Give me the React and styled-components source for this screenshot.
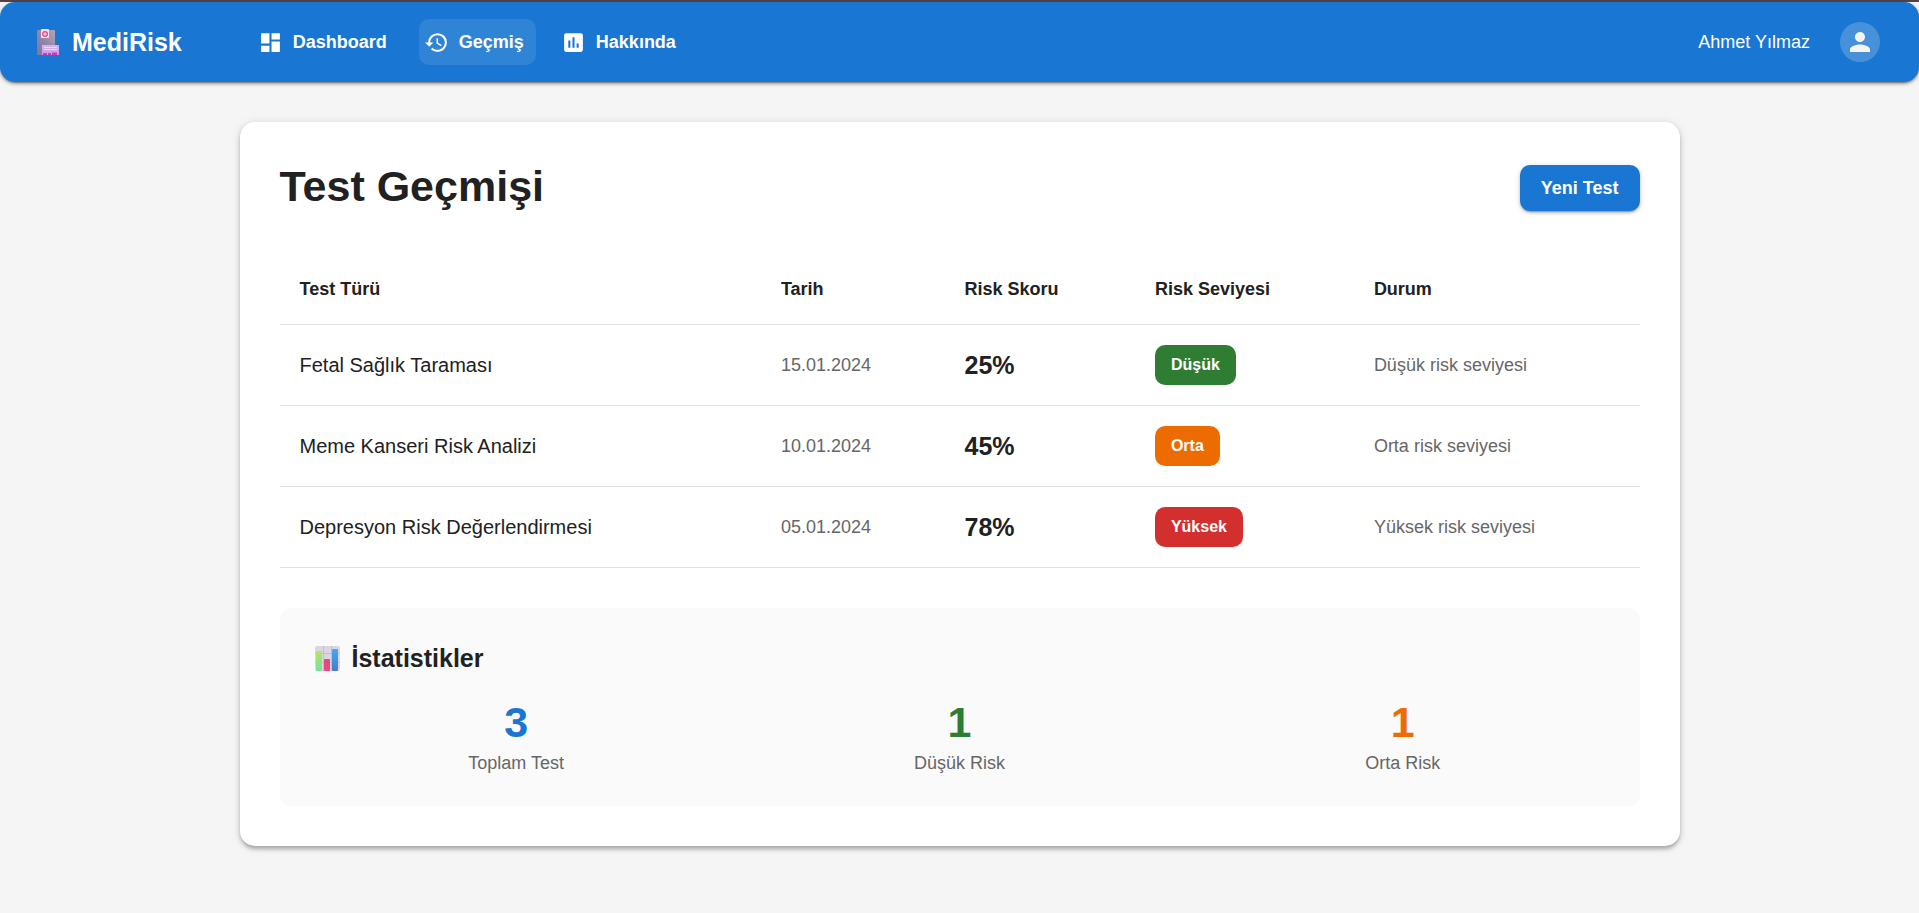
import React from "react";
import styled, { createGlobalStyle, css } from "styled-components";
import { MdAssessment, MdDashboard, MdHistory, MdPerson } from "react-icons/md";

const color = {
  primary: "#1976d2",
  low: "#2e7d32",
  medium: "#ed6c02",
  high: "#d32f2f",
  text: "#212121",
  muted: "#666666",
  line: "#e0e0e0",
};

const GlobalStyle = createGlobalStyle`
  *, *::before, *::after { box-sizing: border-box; }
  body {
    margin: 0;
    background: #f5f5f5;
    color: ${color.text};
    font-family: "Liberation Sans", Arial, sans-serif;
    font-size: 18px;
    line-height: 25px;
  }
`;

const Page = styled.div`
  border-top: 2px solid #554341;
`;

const Header = styled.header`
  display: flex;
  align-items: center;
  height: 80px;
  padding: 0 39px 0 30px;
  border-radius: 15px;
  background: ${color.primary};
  color: #fff;
  box-shadow: 0 3px 1px -2px rgba(0, 0, 0, 0.2), 0 2px 3px rgba(0, 0, 0, 0.3), 0 1px 6px rgba(0, 0, 0, 0.12);
`;

const Brand = styled.a`
  display: flex;
  align-items: center;
  gap: 8px;
  margin-right: 71px;
  color: inherit;
  font-size: 25px;
  font-weight: 700;
  line-height: 40px;
  text-decoration: none;
`;

const Nav = styled.nav`
  display: flex;
  gap: 20px;
`;

const NavLink = styled.a`
  display: flex;
  align-items: center;
  gap: 10px;
  height: 46px;
  padding: 0 12px 0 5px;
  border-radius: 10px;
  color: inherit;
  font-weight: 700;
  text-decoration: none;
  ${(p) => p.$active && css`background: rgba(255, 255, 255, 0.1);`}

  svg { width: 25px; height: 25px; }
`;

const User = styled.div`
  display: flex;
  align-items: center;
  gap: 30px;
  margin-left: auto;
`;

const Avatar = styled.button`
  display: grid;
  place-items: center;
  width: 40px;
  height: 40px;
  padding: 0;
  border: 0;
  border-radius: 50%;
  background: rgba(255, 255, 255, 0.2);
  color: #f5f5f5;

  svg { width: 30px; height: 30px; }
`;

const Card = styled.main`
  max-width: 1440px;
  margin: 40px auto;
  padding: 40px;
  border-radius: 15px;
  background: #fff;
  box-shadow: 0 4px 4px -2px rgba(0, 0, 0, 0.2), 0 3px 5px rgba(0, 0, 0, 0.14), 0 1px 10px rgba(0, 0, 0, 0.12);
`;

const CardHeader = styled.div`
  display: flex;
  align-items: center;
  justify-content: space-between;
  margin-bottom: 40px;
`;

const Title = styled.h1`
  margin: 0;
  padding-bottom: 4px;
  font-size: 43px;
  font-weight: 700;
  line-height: 48px;
`;

const PrimaryButton = styled.button`
  height: 46px;
  padding: 0 21px;
  border: 0;
  border-radius: 10px;
  background: ${color.primary};
  color: #fff;
  font: inherit;
  font-weight: 700;
  box-shadow: 0 3px 1px -2px rgba(0, 0, 0, 0.2), 0 2px 3px rgba(0, 0, 0, 0.2), 0 1px 6px rgba(0, 0, 0, 0.12);
`;

const Table = styled.table`
  width: 100%;
  table-layout: fixed;
  border-collapse: separate;
  border-spacing: 0;
`;

const Column = styled.col`
  width: ${(p) => p.$width};
`;

const HeadCell = styled.th`
  height: 71px;
  padding: 0 20px;
  border-bottom: 1px solid ${color.line};
  text-align: left;
`;

const Cell = styled.td`
  height: 81px;
  padding: 0 20px;
  border-bottom: 1px solid ${color.line};
  color: ${color.muted};
`;

const NameCell = styled(Cell)`
  color: ${color.text};
  font-size: 20px;
`;

const ScoreCell = styled(Cell)`
  color: ${color.text};
  font-size: 25px;
  font-weight: 700;
`;

const Chip = styled.span`
  display: inline-block;
  padding: 0 16px;
  border-radius: 10px;
  background: ${(p) => color[p.$level]};
  color: #fff;
  font-size: 16px;
  font-weight: 700;
  line-height: 40px;
  vertical-align: middle;
`;

const Stats = styled.section`
  margin-top: 40px;
  padding: 30px;
  border-radius: 10px;
  background: #fafafa;
`;

const StatsTitle = styled.h2`
  display: flex;
  align-items: center;
  gap: 8px;
  margin: 0 0 20px;
  font-size: 25px;
  font-weight: 700;
  line-height: 40px;
`;

const StatsGrid = styled.div`
  display: grid;
  grid-template-columns: repeat(3, 1fr);
  gap: 30px;
`;

const Stat = styled.div`
  color: ${color.muted};
  text-align: center;
`;

const StatValue = styled.div`
  padding-bottom: 5px;
  color: ${(p) => color[p.$tone]};
  font-size: 43px;
  font-weight: 700;
  line-height: 48px;
`;

function HospitalIcon() {
  return (
    <svg width="34" height="34" viewBox="0 0 34 34" aria-hidden="true">
      <defs>
        <linearGradient id="tower" x1="0" y1="1" x2="1" y2="0">
          <stop offset="0" stopColor="#8471a3" />
          <stop offset="0.5" stopColor="#9187a8" />
          <stop offset="1" stopColor="#b3a5b6" />
        </linearGradient>
        <linearGradient id="annex" x1="0" y1="0" x2="0" y2="1">
          <stop offset="0" stopColor="#d5b5f0" />
          <stop offset="1" stopColor="#c79be4" />
        </linearGradient>
      </defs>
      <rect x="7" y="5" width="18" height="25" rx="1" fill="url(#tower)" />
      <rect x="11" y="4" width="8" height="9" rx="1" fill="#f3dff2" />
      <circle cx="15" cy="9" r="3" fill="#e84a83" />
      <path d="M15 7v4M13 9h4" stroke="#fbd5e4" strokeWidth="1" />
      <rect x="12" y="20" width="17" height="10" rx="0.5" fill="url(#annex)" />
      <path d="M14 22.5h13M14 24.5h13" stroke="#ead7fa" strokeWidth="1" />
      <path d="M13 28h4v2h-4zM18 28h3v2h-3zM22 27.5h5v2.5h-5z" fill="#c43bb4" />
    </svg>
  );
}

function ChartIcon() {
  return (
    <svg width="34" height="34" viewBox="0 0 34 34" aria-hidden="true">
      <defs>
        <linearGradient id="greenBar" x1="0" y1="0" x2="0" y2="1">
          <stop offset="0" stopColor="#b4e85d" />
          <stop offset="1" stopColor="#79dfa0" />
        </linearGradient>
        <linearGradient id="pinkBar" x1="0" y1="0" x2="0" y2="1">
          <stop offset="0" stopColor="#dc4b78" />
          <stop offset="1" stopColor="#f34482" />
        </linearGradient>
        <linearGradient id="blueBar" x1="0" y1="0" x2="0" y2="1">
          <stop offset="0" stopColor="#42a9ee" />
          <stop offset="1" stopColor="#477dcb" />
        </linearGradient>
      </defs>
      <rect x="5" y="5" width="25" height="25" rx="2" fill="#dcd6e2" />
      <path d="M5 12.5h25M5 21.5h25M13.5 5v25M21.5 5v25" stroke="#c5bccd" strokeWidth="1" />
      <rect x="6" y="10" width="6" height="20" rx="1" fill="url(#greenBar)" />
      <rect x="14" y="18" width="6" height="12" rx="1" fill="url(#pinkBar)" />
      <rect x="22" y="8" width="6" height="22" rx="1" fill="url(#blueBar)" />
    </svg>
  );
}

const tests = [
  { name: "Fetal Sağlık Taraması", date: "15.01.2024", score: "25%", level: "low", label: "Düşük" },
  { name: "Meme Kanseri Risk Analizi", date: "10.01.2024", score: "45%", level: "medium", label: "Orta" },
  { name: "Depresyon Risk Değerlendirmesi", date: "05.01.2024", score: "78%", level: "high", label: "Yüksek" },
];

const stats = [
  { value: 3, label: "Toplam Test", tone: "primary" },
  { value: 1, label: "Düşük Risk", tone: "low" },
  { value: 1, label: "Orta Risk", tone: "medium" },
];

const columns = [
  { title: "Test Türü", width: "35.4%" },
  { title: "Tarih", width: "13.5%" },
  { title: "Risk Skoru", width: "14%" },
  { title: "Risk Seviyesi", width: "16.1%" },
  { title: "Durum", width: "21%" },
];

export default function App() {
  return (
    <Page lang="tr">
      <GlobalStyle />
      <Header>
        <Brand href="#">
          <HospitalIcon />
          MediRisk
        </Brand>
        <Nav>
          <NavLink href="#dashboard"><MdDashboard />Dashboard</NavLink>
          <NavLink href="#gecmis" $active aria-current="page"><MdHistory />Geçmiş</NavLink>
          <NavLink href="#hakkinda"><MdAssessment />Hakkında</NavLink>
        </Nav>
        <User>
          <span>Ahmet Yılmaz</span>
          <Avatar type="button" aria-label="Profil"><MdPerson /></Avatar>
        </User>
      </Header>
      <Card>
        <CardHeader>
          <Title>Test Geçmişi</Title>
          <PrimaryButton type="button">Yeni Test</PrimaryButton>
        </CardHeader>
        <Table>
          <colgroup>
            {columns.map((c) => <Column key={c.title} $width={c.width} />)}
          </colgroup>
          <thead>
            <tr>
              {columns.map((c) => <HeadCell key={c.title} scope="col">{c.title}</HeadCell>)}
            </tr>
          </thead>
          <tbody>
            {tests.map((t) => (
              <tr key={t.name}>
                <NameCell>{t.name}</NameCell>
                <Cell>{t.date}</Cell>
                <ScoreCell>{t.score}</ScoreCell>
                <Cell><Chip $level={t.level}>{t.label}</Chip></Cell>
                <Cell>{t.label} risk seviyesi</Cell>
              </tr>
            ))}
          </tbody>
        </Table>
        <Stats>
          <StatsTitle><ChartIcon />İstatistikler</StatsTitle>
          <StatsGrid>
            {stats.map((s) => (
              <Stat key={s.label}>
                <StatValue $tone={s.tone}>{s.value}</StatValue>
                {s.label}
              </Stat>
            ))}
          </StatsGrid>
        </Stats>
      </Card>
    </Page>
  );
}
